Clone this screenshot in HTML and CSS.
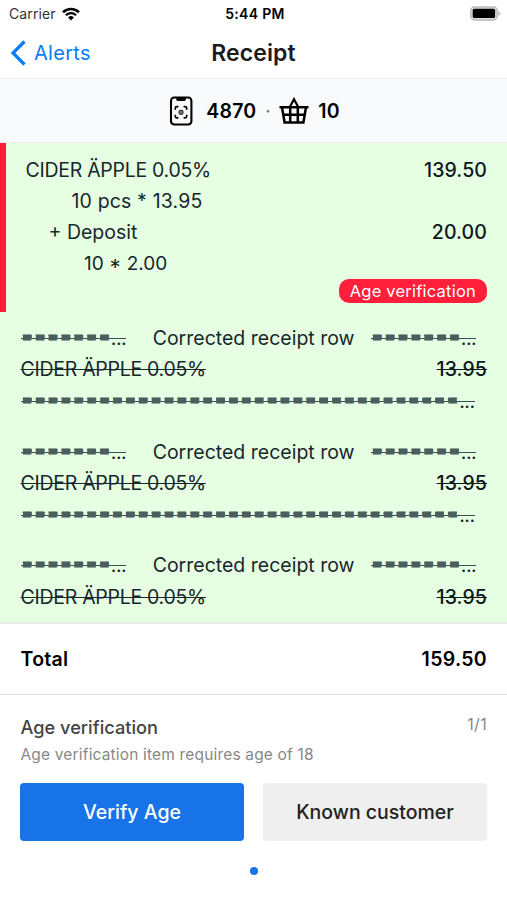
FILE: index.html
```html
<!DOCTYPE html>
<html lang="en">
<head>
	<meta charset="UTF-8">
	<meta name="viewport" content="width=device-width,initial-scale=1">
	<title>Receipt</title>
	<link rel="stylesheet" href="styles.css">
</head>
<body>

	<div class="status-bar">
		<div class="carrier">
			<span>Carrier</span>
			<svg class="wifi" viewBox="0 0 18 14" width="18" height="14">
				<path d="M1 5.2a11.6 11.6 0 0 1 16 0" fill="none" stroke="#000" stroke-width="2.6"/>
				<path d="M3.9 8.3a7.3 7.3 0 0 1 10.2 0" fill="none" stroke="#000" stroke-width="2.2"/>
				<path d="M9 13.5L6.1 10.5a4.2 4.2 0 0 1 5.8 0z"/>
			</svg>
		</div>
		<div class="time">5:44 PM</div>
		<div class="battery">
			<svg viewBox="0 0 31 15" width="31" height="15">
				<rect x=".8" y=".9" width="26.4" height="13" rx="3.8" fill="#ddd" stroke="#bcbcbc" stroke-width="1.5"/>
				<rect x="2.7" y="2.8" width="22.4" height="9.2" rx="1.5"/>
				<path d="M28.4 5.2v4.6q2-.7 2-2.3t-2-2.3z" fill="#bcbcbc"/>
			</svg>
		</div>
	</div>

	<header class="nav">
		<a href="#" class="back">
			<svg viewBox="0 0 16 26" width="16" height="26">
				<path d="M14.5 1.5L3 13l11.5 11.5" fill="none" stroke="#087cf8" stroke-width="3.2"/>
			</svg>
			<span>Alerts</span>
		</a>
		<h1>Receipt</h1>
	</header>

	<div class="summary">
		<svg class="phone" viewBox="0 0 24 30" width="24" height="30">
			<rect x="2" y="1.5" width="20.4" height="27" rx="3.2" fill="none" stroke="#000" stroke-width="2.1"/>
			<path d="M6.5 1h11l-1 3.2q-.3.8-1.2.8H8.7q-.9 0-1.2-.8z"/>
			<path d="M6.3 13.8v-1.5q0-1.6 1.6-1.6h1.5M14.6 10.7h1.5q1.6 0 1.6 1.6v1.5M17.7 18.8v1.5q0 1.6-1.6 1.6h-1.5M9.4 21.9H7.9q-1.6 0-1.6-1.6v-1.5" fill="none" stroke="#000" stroke-width="1.7"/>
			<rect x="10" y="14.3" width="4" height="4" rx="1" fill="#777" stroke="#222" stroke-width="1"/>
		</svg>
		<span class="code">4870</span>
		<span class="dot">·</span>
		<svg class="basket" viewBox="0 0 30 28" width="30" height="28">
			<path d="M.5 10.3h29M3 10.3l2.6 15.2h18.8L27 10.3M4.3 17.8h21.4M11.2 10.3v15M18.8 10.3v15" fill="none" stroke="#000" stroke-width="2.5"/>
			<path d="M10.8 10L15 2.2l4.2 7.8" fill="none" stroke="#000" stroke-width="2.2"/>
		</svg>
		<span class="count">10</span>
	</div>

	<main class="receipt">
		<section class="item flagged">
			<div class="row"><span class="name">CIDER ÄPPLE 0.05%</span><span class="price">139.50</span></div>
			<div class="row pieces">10 pcs * 13.95</div>
			<div class="row deposit"><span>+ Deposit</span><span class="price">20.00</span></div>
			<div class="row deposit-pieces">10 * 2.00</div>
			<span class="badge">Age verification</span>
		</section>

		<section class="item corrected">
			<div class="row title"><s class="rule"><span class="marks">=======</span>...</s><span>Corrected receipt row</span><s class="rule"><span class="marks">=======</span>...</s></div>
			<div class="row"><s class="name">CIDER ÄPPLE 0.05%</s><s class="price">13.95</s></div>
			<div class="row line"><s class="rule"><span class="marks">==================================</span>...</s></div>
		</section>

		<section class="item corrected">
			<div class="row title"><s class="rule"><span class="marks">=======</span>...</s><span>Corrected receipt row</span><s class="rule"><span class="marks">=======</span>...</s></div>
			<div class="row"><s class="name">CIDER ÄPPLE 0.05%</s><s class="price">13.95</s></div>
			<div class="row line"><s class="rule"><span class="marks">==================================</span>...</s></div>
		</section>

		<section class="item corrected">
			<div class="row title"><s class="rule"><span class="marks">=======</span>...</s><span>Corrected receipt row</span><s class="rule"><span class="marks">=======</span>...</s></div>
			<div class="row"><s class="name">CIDER ÄPPLE 0.05%</s><s class="price">13.95</s></div>
		</section>
	</main>

	<div class="total">
		<span>Total</span>
		<span>159.50</span>
	</div>

	<footer class="alert">
		<div class="alert-head">
			<h2>Age verification</h2>
			<span class="page">1/1</span>
		</div>
		<p>Age verification item requires age of 18</p>
		<div class="buttons">
			<button class="primary">Verify Age</button>
			<button>Known customer</button>
		</div>
		<div class="pager"></div>
	</footer>

</body>
</html>
```
FILE: styles.css
```css
* {
	box-sizing: border-box;
}

body {
	margin: 0;
	height: 900px;
	display: flex;
	flex-direction: column;
	overflow: hidden;
	background: #ffffff;
	color: #000000;
	font-family: Inter, "Liberation Sans", sans-serif;
	font-size: 19.5px;
}

svg {
	display: block;
	flex: none;
}

.status-bar {
	height: 27px;
	flex: none;
	padding: 0 6px 0 9px;
	display: grid;
	grid-template-columns: 1fr auto 1fr;
	align-items: center;
	font-size: 14px;
	line-height: 27px;
}

.carrier {
	display: flex;
	align-items: center;
	gap: 6px;
	color: #333333;
	letter-spacing: .1px;
}

.time {
	font-weight: 600;
	font-size: 14px;
	letter-spacing: .3px;
}

.battery {
	justify-self: end;
}

.nav {
	height: 51px;
	flex: none;
	padding: 0 10px;
	display: grid;
	grid-template-columns: 1fr auto 1fr;
	align-items: center;
}

.back {
	display: flex;
	align-items: center;
	gap: 8px;
	color: #087cf8;
	font-size: 20px;
	letter-spacing: .3px;
	text-decoration: none;
}

h1 {
	margin: 0;
	color: #1c1c1e;
	font-size: 23px;
	font-weight: 600;
	letter-spacing: .1px;
}

.summary {
	height: 65px;
	flex: none;
	padding-left: 2px;
	display: flex;
	align-items: center;
	justify-content: center;
	background: #f9fafc;
	border-top: 1px solid #f4f4f5;
	border-bottom: 1px solid #ececf2;
	font-weight: 600;
	letter-spacing: .2px;
}

.code {
	margin-left: 13px;
}

.dot {
	margin: 0 8px 0 9px;
	color: #777777;
	font-weight: 400;
}

.count {
	margin-left: 9px;
}

.receipt {
	height: 479px;
	flex: none;
	overflow: hidden;
	background: #e6ffe3;
	color: #17272b;
}

.item {
	padding: 0 20px;
}

.row {
	height: 31.3px;
	display: flex;
	align-items: center;
	justify-content: space-between;
	white-space: nowrap;
}

.name {
	letter-spacing: -.28px;
}

.price {
	font-weight: 500;
	color: #0c181c;
	letter-spacing: .1px;
}

.flagged {
	height: 169px;
	padding-top: 11px;
	padding-left: 19.5px;
	border-left: 6px solid #ff1f3a;
	display: flex;
	flex-direction: column;
}

.pieces {
	padding-left: 46px;
	letter-spacing: .15px;
}

.deposit {
	padding-left: 23px;
}

.deposit-pieces {
	padding-left: 58.5px;
	font-size: 19px;
}

.badge {
	align-self: flex-end;
	height: 24px;
	padding: 0 11px;
	border-radius: 10px;
	background: #ff1f3a;
	color: #ffffff;
	font-size: 16.5px;
	line-height: 24px;
	letter-spacing: .22px;
}

.corrected {
	height: 113.6px;
	padding: 10.5px 20px 0 20.5px;
}

.title {
	justify-content: flex-start;
}

.title > span {
	margin: 0 16px 0 26.5px;
}

.line {
	height: 32px;
}

s {
	text-decoration-thickness: 1.3px;
}

/* the line runs through the middle of the = signs */
.rule {
	line-height: 24px;
	text-decoration: none;
	letter-spacing: -.5px;
	background: linear-gradient(#3c4e50, #3c4e50) 0 12px / 100% 1px no-repeat;
}

/* one tile per = sign */
.marks {
	display: inline-block;
	height: 6px;
	line-height: 6px;
	vertical-align: 2px;
	letter-spacing: 0;
	color: #4b5e5e;
	background: linear-gradient(90deg, transparent 12%, #4b5e5e 12% 88%, transparent 88%) 0 2px / calc(100% / 7) 4px repeat-x;
}

.line .marks {
	background-size: calc(100% / 34) 4px;
}

.total {
	height: 73px;
	flex: none;
	padding: 0 20px 0 20.5px;
	display: flex;
	align-items: center;
	justify-content: space-between;
	border-top: 2px solid #ebebeb;
	border-bottom: 1px solid #e2e2e2;
	font-weight: 600;
	letter-spacing: .3px;
}

.alert {
	padding: 19px 20px 0;
}

.alert-head {
	display: flex;
	justify-content: space-between;
	padding-left: .5px;
}

h2 {
	margin: 0;
	color: #444444;
	font-size: 18.2px;
	font-weight: 500;
	line-height: 26px;
}

.page {
	color: #888888;
	font-size: 16px;
	line-height: 20px;
	letter-spacing: .3px;
}

.alert p {
	margin: 4px 0 17px .5px;
	color: #888888;
	font-size: 15.5px;
	line-height: 22px;
	letter-spacing: .17px;
}

.buttons {
	display: grid;
	grid-template-columns: 1fr 1fr;
	gap: 19px;
}

button {
	height: 58px;
	padding: 0;
	border: 0;
	border-radius: 4px;
	background: #efefef;
	color: #222222;
	font: 500 19.5px Inter, "Liberation Sans", sans-serif;
}

.primary {
	background: #1973e8;
	color: #ffffff;
}

.pager {
	width: 8px;
	height: 8px;
	margin: 26px auto 0;
	border-radius: 50%;
	background: #1973e8;
}
```
